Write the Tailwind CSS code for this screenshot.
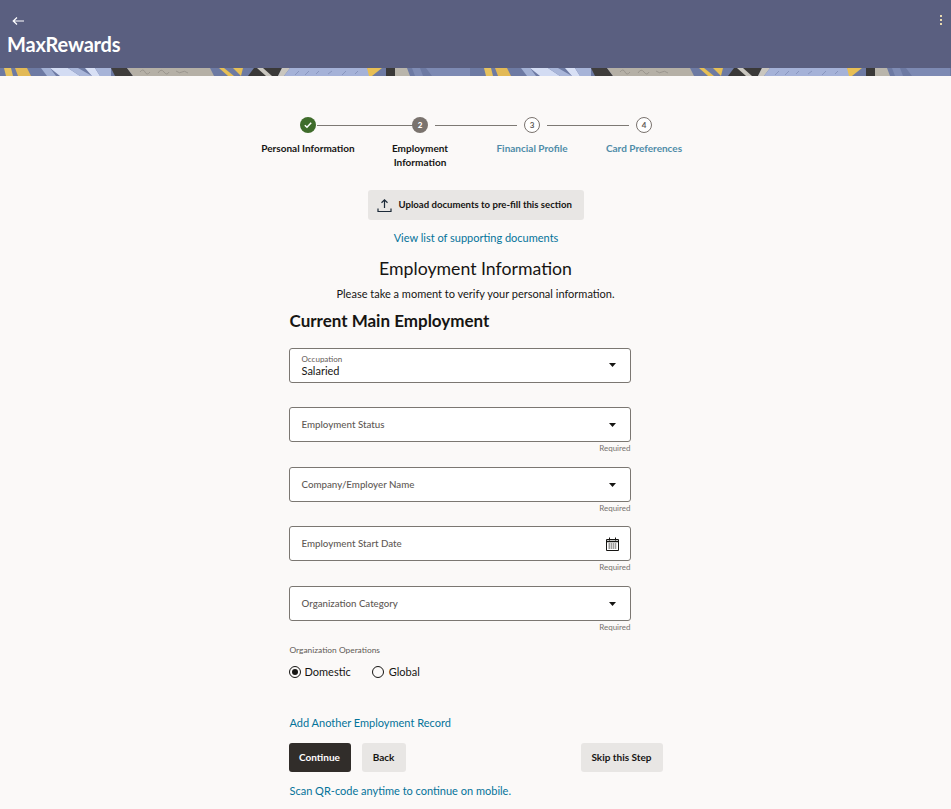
<!DOCTYPE html>
<html lang="en">
<head>
    <meta charset="UTF-8">
    <meta name="viewport" content="width=device-width, initial-scale=1.0">
    <title>MaxRewards</title>
    <script src="https://cdn.jsdelivr.net/npm/@tailwindcss/browser@4"></script>
</head>
<body class="bg-[#fbf9f8] font-['Lato',sans-serif] text-[#161513] overflow-hidden">
    <!-- Header -->
    <header class="relative bg-[#5a5f80] h-[68px] px-[7px] pt-[13px] text-white">
        <svg class="ml-[5px] block" width="13" height="16" viewBox="0 0 13 16" fill="none" stroke="white" stroke-width="1.2"><path d="M1 8h11M5 4.500 1.200 8 5 11.500"/></svg>
        <h1 class="text-[20px] leading-[28px] font-bold tracking-[-0.2px] mt-[1px]">MaxRewards</h1>
        <div class="absolute right-[9px] top-[15px] flex flex-col gap-[2px]">
            <span class="w-[2px] h-[2px] bg-[#e8d9b0]"></span>
            <span class="w-[2px] h-[2px] bg-[#e8d9b0]"></span>
            <span class="w-[2px] h-[2px] bg-[#e8d9b0]"></span>
        </div>
    </header>

    <!-- Pattern strip -->
    <svg class="block" width="951" height="8" viewBox="0 0 951 8" preserveAspectRatio="none">
        <rect width="951" height="8" fill="#6d7aa3"/>
        <defs>
            <g id="strip">
                <polygon points="4,0 11,0 13,8 6,8" fill="#e6c25e"/>
                <polygon points="15,0 27,0 31,8 18,8" fill="#e2b955"/>
                <polygon points="41,0 50,0 56,8 47,8" fill="#a3b1d4"/>
                <polygon points="50,0 68,0 80,8 60,8" fill="#d3dcf3"/>
                <polygon points="68,0 78,0 92,8 80,8" fill="#a9b6d9"/>
                <polygon points="85,0 95,0 100,8 92,8" fill="#d8e0f5"/>
                <polygon points="95,0 111,0 111,8 100,8" fill="#a7b4d8"/>
                <polygon points="111,0 127,0 133,8 115,8" fill="#3f3d3c"/>
                <polygon points="127,0 210,0 214,8 133,8" fill="#b5b0a6"/>
                <path d="M140 4q3-4 5 0t5 0M158 5q3-5 6-1t5 0M176 3q4 3 6 1t6 1" fill="none" stroke="#8f8b84" stroke-width=".7"/>
                <polygon points="219,0 224,0 234,8 228,8" fill="#e6bf55"/>
                <polygon points="233,0 243,0 241,8" fill="#e6bf55"/>
                <polygon points="254,0 282,0 278,8 248,8" fill="#3a3938"/>
                <polygon points="257,0 263,0 272,8 266,8" fill="#c9c6bf"/>
                <polygon points="282,0 290,0 284,8 278,8" fill="#c9c6bf"/>
                <polygon points="290,0 367,0 372,8 284,8" fill="#a5b2d8"/>
                <path d="M295 7l4-4M305 7l4-4M316 6l3-3M328 6l4-3M342 7l4-4M355 6l3-3" fill="none" stroke="#7d8ab3" stroke-width=".7"/>
                <polygon points="367,0 382,0 372,8 369,8" fill="#e8bf55"/>
                <rect x="386" y="0" width="9" height="8" fill="#3a3938"/>
                <polygon points="395,0 407,0 410,8 395,8" fill="#b9b5ab"/>
                <polygon points="412,0 420,0 423,8 415,8" fill="#7f8cb4"/>
                <polygon points="426,0 470,0 470,8 432,8" fill="#7d8ab3"/>
            </g>
        </defs>
        <use href="#strip"/>
        <use href="#strip" x="480"/>
    </svg>

    <main class="flex flex-col items-center">
        <!-- Stepper -->
        <div class="w-[448px] ml-[1px] mt-[41px] grid grid-cols-4 h-[64px] text-[10px] leading-[14px] font-bold text-center">
            <div class="relative flex flex-col items-center">
                <span class="z-10 w-[16px] h-[16px] rounded-full bg-[#3f6c2b] flex items-center justify-center">
                    <svg width="10" height="10" viewBox="0 0 10 10" fill="none" stroke="white" stroke-width="1.500"><path d="M1.800 5.200 4 7.300 8.200 2.800"/></svg>
                </span>
                <span class="absolute left-[65px] w-[96px] top-[7.500px] h-px bg-[#7d7974]"></span>
                <span class="mt-[8px] whitespace-nowrap">Personal Information</span>
            </div>
            <div class="relative flex flex-col items-center">
                <span class="z-10 w-[16px] h-[16px] rounded-full bg-[#7a736e] text-white text-[8px] leading-[16px] font-black">2</span>
                <span class="absolute left-[71px] w-[82px] top-[7.500px] h-px bg-[#7d7974]"></span>
                <span class="mt-[8px]">Employment<br>Information</span>
            </div>
            <div class="relative flex flex-col items-center">
                <span class="z-10 w-[16px] h-[16px] rounded-full border border-[#7a736e] bg-white text-[#5f5a56] text-[8px] leading-[14px] font-bold">3</span>
                <span class="absolute left-[71px] w-[82px] top-[7.500px] h-px bg-[#7d7974]"></span>
                <span class="mt-[8px] text-[#4f8ca8] whitespace-nowrap">Financial Profile</span>
            </div>
            <div class="flex flex-col items-center">
                <span class="w-[16px] h-[16px] rounded-full border border-[#7a736e] bg-white text-[#5f5a56] text-[8px] leading-[14px] font-bold">4</span>
                <span class="mt-[8px] text-[#4f8ca8] whitespace-nowrap">Card Preferences</span>
            </div>
        </div>

        <!-- Upload -->
        <button class="mt-[9px] w-[216px] h-[30px] rounded-[3px] bg-[#e8e6e4] flex items-center pl-[9px] gap-[7px] text-[9.600px] font-bold">
            <svg width="15" height="15" viewBox="0 0 15 15" fill="none" stroke="#1c2a38" stroke-width="1.200"><path d="M7.500 10V2M4.500 4.700 7.500 1.800l3 2.900M1 10.500v3h13v-3"/></svg>
            Upload documents to pre-fill this section
        </button>
        <a class="mt-[10px] ml-px text-[11px] leading-[16px] text-[#04739a]">View list of supporting documents</a>

        <h2 class="mt-[11px] text-[17.700px] leading-[24px]">Employment Information</h2>
        <p class="mt-[5px] text-[11px] leading-[16px]">Please take a moment to verify your personal information.</p>

        <!-- Form -->
        <form class="w-[342px] mt-[8px] mr-[32px]">
            <h3 class="ml-px text-[17px] leading-[22px] font-bold">Current Main Employment</h3>

            <div class="mt-[16px] h-[35px] rounded-[3px] border border-[#7b7772] bg-white pl-[12px] pr-[13px] flex items-center justify-between">
                <div>
                    <div class="text-[8px] leading-[9px] text-[#5f5a56]">Occupation</div>
                    <div class="text-[11px] leading-[13px]">Salaried</div>
                </div>
                <svg width="7" height="4" viewBox="0 0 7 4" fill="#161513" class="mt-[-1px] mr-[1px]"><path d="M0 0h7L3.500 4z"/></svg>
            </div>

            <div class="mt-[24px] h-[35px] rounded-[3px] border border-[#7b7772] bg-white pl-[12px] pr-[13px] flex items-center justify-between">
                <span class="text-[9.750px] font-medium text-[#5f5a56]">Employment Status</span>
                <svg width="7" height="4" viewBox="0 0 7 4" fill="#161513" class="mr-[1px]"><path d="M0 0h7L3.500 4z"/></svg>
            </div>
            <div class="text-right text-[8px] leading-[12px] text-[#77726e]">Required</div>

            <div class="mt-[13px] h-[35px] rounded-[3px] border border-[#7b7772] bg-white pl-[12px] pr-[13px] flex items-center justify-between">
                <span class="text-[9.750px] font-medium text-[#5f5a56]">Company/Employer Name</span>
                <svg width="7" height="4" viewBox="0 0 7 4" fill="#161513" class="mr-[1px]"><path d="M0 0h7L3.500 4z"/></svg>
            </div>
            <div class="text-right text-[8px] leading-[12px] text-[#77726e]">Required</div>

            <div class="mt-[12px] h-[35px] rounded-[3px] border border-[#7b7772] bg-white pl-[12px] pr-[11px] flex items-center justify-between">
                <span class="text-[9.750px] font-medium text-[#5f5a56]">Employment Start Date</span>
                <svg width="13" height="14" viewBox="0 0 13 14" fill="none" stroke="#161513" stroke-width="1"><path d="M.500 2.500h12v11H.500zM3.500 .500v3M9.500 .500v3" /><path d="M0 4.500h13" stroke-width="1.500"/><path d="M2.500 7h8M2.500 9h8M2.500 11h8" stroke-dasharray="1.500 .6" stroke="#3d3a38"/></svg>
            </div>
            <div class="text-right text-[8px] leading-[12px] text-[#77726e]">Required</div>

            <div class="mt-[13px] h-[35px] rounded-[3px] border border-[#7b7772] bg-white pl-[12px] pr-[13px] flex items-center justify-between">
                <span class="text-[9.700px] font-medium text-[#5f5a56]">Organization Category</span>
                <svg width="7" height="4" viewBox="0 0 7 4" fill="#161513" class="mr-[1px]"><path d="M0 0h7L3.500 4z"/></svg>
            </div>
            <div class="text-right text-[8px] leading-[12px] text-[#77726e]">Required</div>

            <div class="mt-[12px] ml-px text-[8.400px] leading-[10px] text-[#5f5a56]">Organization Operations</div>
            <div class="mt-[9px] flex items-center text-[11px] leading-[16px]">
                <span class="w-[12px] h-[12px] rounded-full border border-[#161513] flex items-center justify-center"><span class="w-[6px] h-[6px] rounded-full bg-[#161513]"></span></span>
                <span class="ml-[4px]">Domestic</span>
                <span class="ml-[21px] w-[12px] h-[12px] rounded-full border border-[#161513]"></span>
                <span class="ml-[5px]">Global</span>
            </div>

            <a class="block mt-[35px] ml-px text-[11px] leading-[16px] text-[#04739a]">Add Another Employment Record</a>

            <div class="mt-[12px] flex text-[10px] font-bold">
                <button class="w-[62px] h-[29px] shrink-0 rounded-[3px] bg-[#312d2a] text-white">Continue</button>
                <button class="ml-[11px] w-[44px] h-[29px] shrink-0 rounded-[3px] bg-[#e8e6e4]">Back</button>
                <button class="ml-[175px] w-[82px] h-[29px] shrink-0 rounded-[3px] bg-[#e8e6e4]">Skip this Step</button>
            </div>

            <a class="block mt-[11px] ml-px text-[11px] leading-[16px] text-[#04739a]">Scan QR-code anytime to continue on mobile.</a>
        </form>
    </main>
</body>
</html>
